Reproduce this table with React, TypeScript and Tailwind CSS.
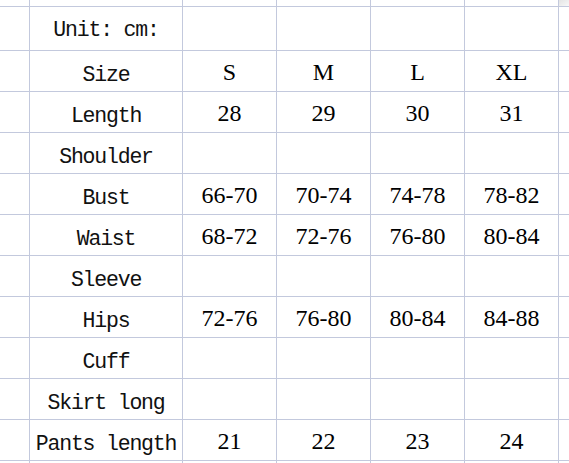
import React from 'react'

const rows: { label: string; values: string[] }[] = [
  { label: 'Size', values: ['S', 'M', 'L', 'XL'] },
  { label: 'Length', values: ['28', '29', '30', '31'] },
  { label: 'Shoulder', values: ['', '', '', ''] },
  { label: 'Bust', values: ['66-70', '70-74', '74-78', '78-82'] },
  { label: 'Waist', values: ['68-72', '72-76', '76-80', '80-84'] },
  { label: 'Sleeve', values: ['', '', '', ''] },
  { label: 'Hips', values: ['72-76', '76-80', '80-84', '84-88'] },
  { label: 'Cuff', values: ['', '', '', ''] },
  { label: 'Skirt long', values: ['', '', '', ''] },
  { label: 'Pants length', values: ['21', '22', '23', '24'] },
]

const line = 'border-r border-b border-[#c3c9dd]'
const labelCell = `${line} flex items-end justify-center text-[21.5px] tracking-[-1.2px] text-[#111] font-['Liberation_Mono',monospace] whitespace-pre`
const valueCell = `${line} flex items-end justify-center pb-[1px] text-[24px] text-black font-['Liberation_Serif',serif]`

function Row({ label, values }: { label: string; values: string[] }) {
  return (
    <>
      <div className={line} />
      <div className={`${labelCell} pb-[0px]`}>{label}</div>
      {values.map((v, i) => (
        <div key={i} className={valueCell}>{v}</div>
      ))}
      <div className="border-b border-[#c3c9dd]" />
    </>
  )
}

export default function App() {
  return (
    <div className="w-[569px] h-[463px] overflow-hidden bg-white">
      <div className="grid grid-cols-[30px_153px_94px_94px_94px_94px_1fr] grid-rows-[7px_44px_repeat(10,41px)_1fr] h-full">
        {/* top strip */}
        <div className={line} />
        <div className={line} />
        <div className={line} />
        <div className={line} />
        <div className={line} />
        <div className={line} />
        <div className="border-b border-[#c3c9dd] bg-gradient-to-br from-[#e4e4e4] to-[#f8f8f8]" />

        {/* unit row */}
        <div className={line} />
        <div className={`${labelCell} pb-[4px]`}>Unit: cm:</div>
        <div className={line} />
        <div className={line} />
        <div className={line} />
        <div className={line} />
        <div className="border-b border-[#c3c9dd]" />

        {rows.map((r) => (
          <Row key={r.label} label={r.label} values={r.values} />
        ))}

        {/* bottom strip */}
        <div className="border-r border-[#c3c9dd]" />
        <div className="border-r border-[#c3c9dd]" />
        <div className="border-r border-[#c3c9dd]" />
        <div className="border-r border-[#c3c9dd]" />
        <div className="border-r border-[#c3c9dd]" />
        <div className="border-r border-[#c3c9dd]" />
        <div />
      </div>
    </div>
  )
}
